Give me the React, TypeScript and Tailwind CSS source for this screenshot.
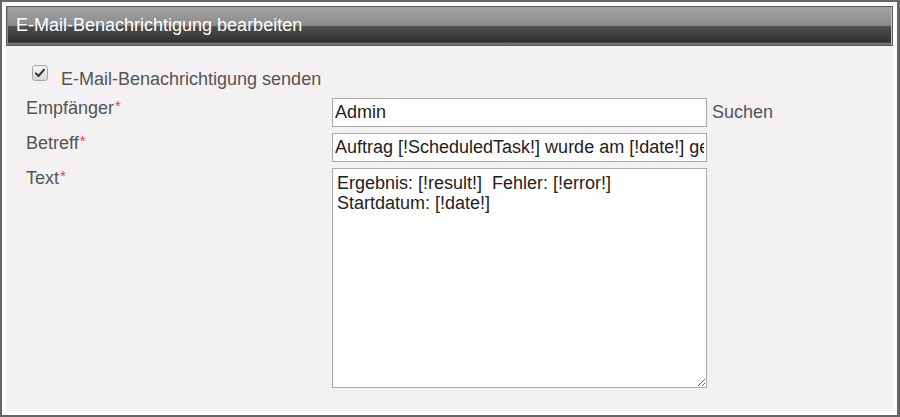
import React from "react";

const fields = [
  { label: "Empfänger", value: "Admin", extra: "Suchen" },
  { label: "Betreff", value: "Auftrag [!ScheduledTask!] wurde am [!date!] gestartet" },
];

const Required = () => (
  <span className="text-[15px] leading-none align-top text-[#e8413c] ml-[1px]">*</span>
);

const App = () => {
  return (
    <div className="w-[900px] h-[417px] border-2 border-r-[3px] border-[#666] bg-white p-[4px] font-['Liberation_Sans',Arial,sans-serif]">
      <div className="flex h-full flex-col bg-[#f3f1f2]">
        <div className="h-[40px] shrink-0 border border-[#5a5a5a] bg-[linear-gradient(to_bottom,#a4a4a4_0%,#8c8c8c_48%,#4e4e4e_52%,#303030_92%,#707070_96%)] shadow-[inset_1px_0_0_#8a8a8a,inset_-1px_0_0_#c0c0c0] pl-[9px] pt-[8px] text-[18px] leading-[21px] text-white">
          E-Mail-Benachrichtigung bearbeiten
        </div>

        <div className="pl-[20px] pt-[23px]">
          <label className="flex items-start gap-[13px] pl-[6px] text-[18px] leading-[21px] text-[#555]">
            <span className="mt-[-4px] flex h-[16px] w-[16px] items-center justify-center rounded-[3px] border border-[#a8a8a8] bg-[linear-gradient(to_bottom,#f4f4f4,#d8d8d8)]">
              <svg viewBox="0 0 16 16" className="h-[12px] w-[12px]">
                <path d="M2.5 8.5 L6 12 L13.5 3.5" fill="none" stroke="#333" strokeWidth={2.6} strokeLinecap="round" strokeLinejoin="round" />
              </svg>
            </span>
            E-Mail-Benachrichtigung senden
          </label>

          <div className="mt-[8px] flex flex-col gap-[6px]">
            {fields.map((f) => (
              <div key={f.label} className="flex items-start">
                <div className="w-[306px] shrink-0 text-[18px] leading-[21px] text-[#555]">
                  {f.label}
                  <Required />
                </div>
                <input
                  readOnly
                  value={f.value}
                  className="h-[29px] w-[375px] border border-[#aaa] bg-white px-[2px] text-[18px] text-[#222] outline-none"
                />
                {f.extra && (
                  <span className="ml-[5px] mt-[4px] text-[18px] leading-[21px] text-[#555]">{f.extra}</span>
                )}
              </div>
            ))}
            <div className="flex items-start">
              <div className="w-[306px] shrink-0 text-[18px] leading-[21px] text-[#555]">
                Text
                <Required />
              </div>
              <textarea
                readOnly
                defaultValue={"Ergebnis: [!result!]  Fehler: [!error!]\nStartdatum: [!date!]"}
                className="h-[220px] w-[375px] resize border border-[#aaa] bg-white px-[4px] pt-[4px] text-[18px] leading-[20px] text-[#222] outline-none"
              />
            </div>
          </div>
        </div>
      </div>
    </div>
  );
};

export default App;
